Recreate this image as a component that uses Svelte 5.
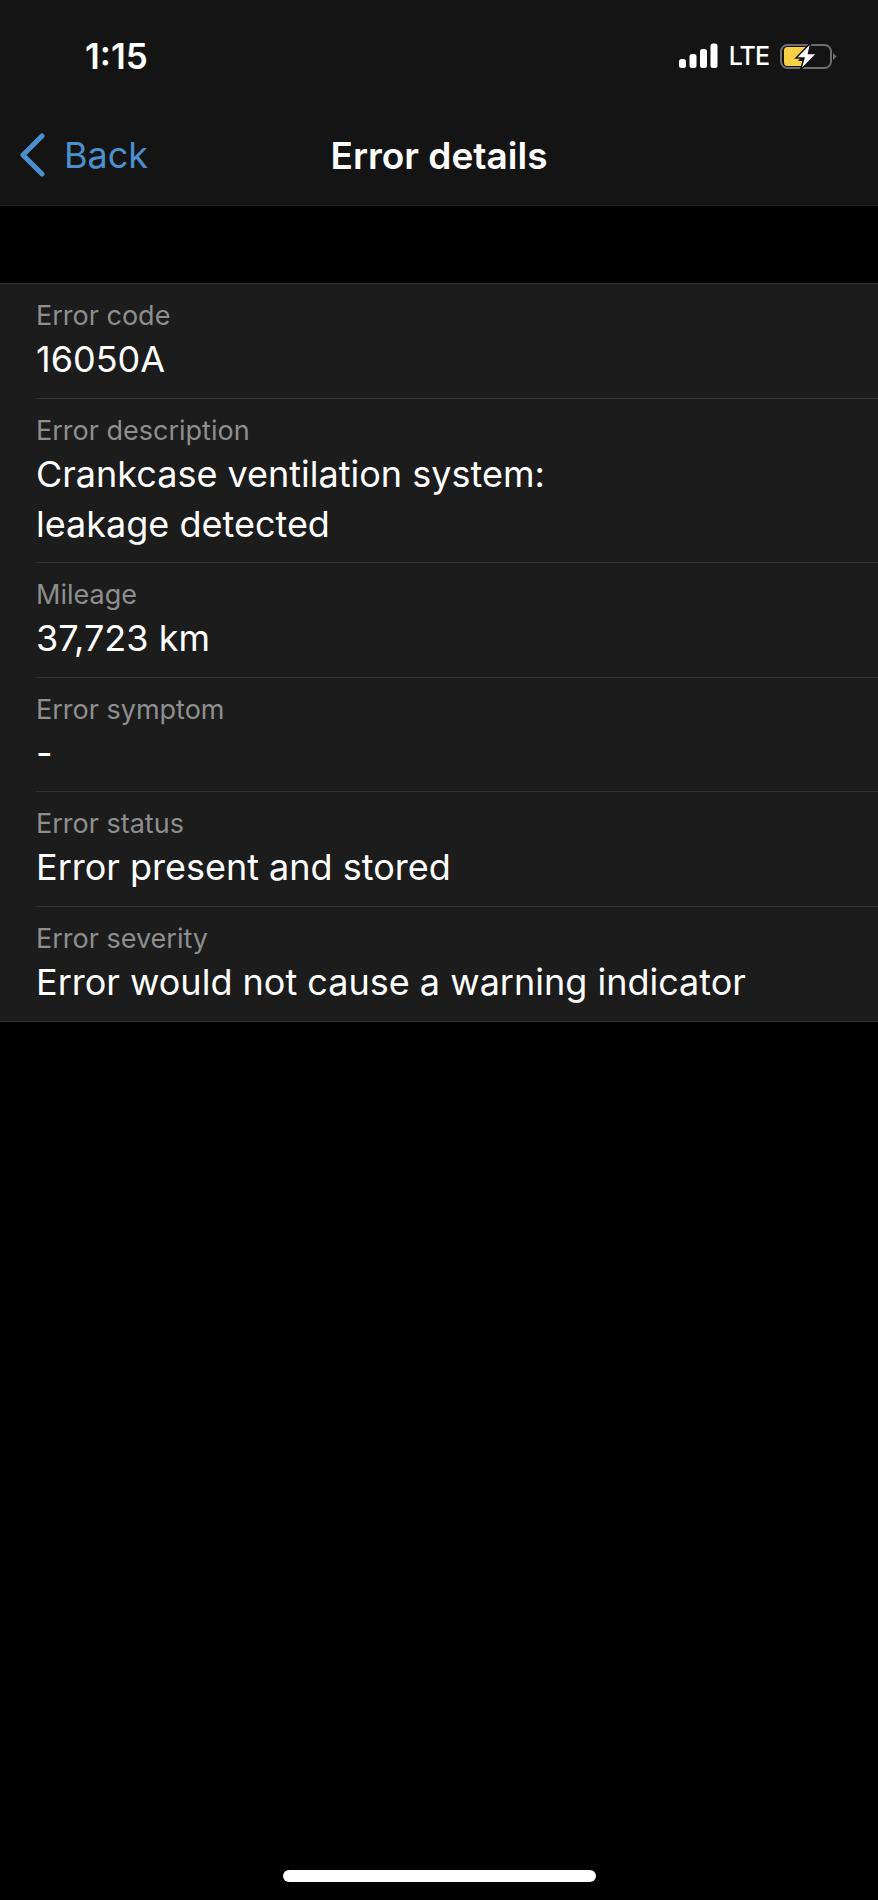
<script>
	const rows = [
		{ label: 'Error code', value: ['16050A'] },
		{ label: 'Error description', value: ['Crankcase ventilation system:', 'leakage detected'] },
		{ label: 'Mileage', value: ['37,723 km'] },
		{ label: 'Error symptom', value: ['-'] },
		{ label: 'Error status', value: ['Error present and stored'] },
		{ label: 'Error severity', value: ['Error would not cause a warning indicator'] }
	];
</script>

<div class="screen">
	<header>
		<div class="status">
			<span class="time">1:15</span>
			<div class="indicators">
				<svg class="signal" width="39" height="26" viewBox="0 0 39 26">
					<rect x="0" y="16" width="7" height="9" rx="2.5" />
					<rect x="10.5" y="11" width="7" height="14" rx="2.5" />
					<rect x="21" y="6" width="7" height="19" rx="2.5" />
					<rect x="31.5" y="0.5" width="7" height="24.5" rx="2.5" />
				</svg>
				<span class="lte">LTE</span>
				<svg class="battery" width="57" height="28" viewBox="0 0 57 28">
					<rect x="1" y="3" width="50" height="23" rx="6.5" fill="none" stroke="#6e6e6e" stroke-width="2" />
					<path d="M53 11 L56.5 14.5 L53 18 Z" fill="#6e6e6e" />
					<path d="M7.5 5 H26 L26 9.5 L18 19 L26 19 L22 24 H7.5 Q4 24 4 20.5 V8.5 Q4 5 7.5 5 Z" fill="#f7d046" />
					<path d="M31 0.5 L16 16 H24 L20.5 28 L37 11.5 H28.5 Z" fill="#fff" stroke="#141414" stroke-width="1.5" />
				</svg>
			</div>
		</div>
		<nav>
			<div class="back">
				<svg width="28" height="44" viewBox="0 0 28 44">
					<path d="M23 3 L4 22 L23 41" fill="none" stroke="#4a90cf" stroke-width="5" stroke-linecap="round" stroke-linejoin="round" />
				</svg>
				<span>Back</span>
			</div>
			<h1>Error details</h1>
		</nav>
	</header>

	<ul>
		{#each rows as row}
			<li>
				<div class="row">
					<div class="label">{row.label}</div>
					{#each row.value as line}
						<div class="value">{line}</div>
					{/each}
				</div>
			</li>
		{/each}
	</ul>

	<div class="home"></div>
</div>

<style>
	:global(body) {
		margin: 0;
		background: #000;
	}

	.screen {
		position: relative;
		width: 878px;
		height: 1900px;
		background: #000;
		color: #fff;
		font-family: Inter, 'Liberation Sans', sans-serif;
		overflow: hidden;
	}

	header {
		height: 205px;
		background: #141414;
		border-bottom: 1px solid #1f1f1f;
	}

	.status {
		display: flex;
		justify-content: space-between;
		align-items: center;
		height: 112px;
		padding: 0 41px 0 85px;
		box-sizing: border-box;
	}

	.time {
		font-size: 35px;
		font-weight: 600;
	}

	.indicators {
		display: flex;
		align-items: center;
		gap: 11px;
	}

	.signal rect {
		fill: #fff;
	}

	.lte {
		font-size: 25px;
		font-weight: 500;
		letter-spacing: -1px;
	}

	nav {
		position: relative;
		display: flex;
		justify-content: center;
		align-items: center;
		height: 88px;
		margin-top: -1px;
	}

	.back {
		position: absolute;
		left: 19px;
		top: 0;
		bottom: 0;
		display: flex;
		align-items: center;
		gap: 17px;
		color: #4a90cf;
		font-size: 36px;
	}

	h1 {
		margin: 0;
		font-size: 37px;
		font-weight: 600;
	}

	ul {
		list-style: none;
		margin: 77px 0 0;
		padding: 0;
		background: #1c1c1c;
		border-top: 1px solid #333;
		border-bottom: 1px solid #333;
	}

	li {
		padding-left: 36px;
	}

	.row {
		padding: 13px 0 13.6px;
		border-bottom: 1px solid #333;
	}

	li:last-child .row {
		border-bottom: none;
	}

	.label {
		color: #8e8e8e;
		font-size: 27px;
		line-height: 37px;
		margin-bottom: 1px;
	}

	.value {
		font-size: 36px;
		line-height: 49px;
	}

	.value + .value {
		line-height: 50px;
	}

	.home {
		position: absolute;
		left: 283px;
		bottom: 18px;
		width: 313px;
		height: 12px;
		border-radius: 6px;
		background: #fff;
	}
</style>
